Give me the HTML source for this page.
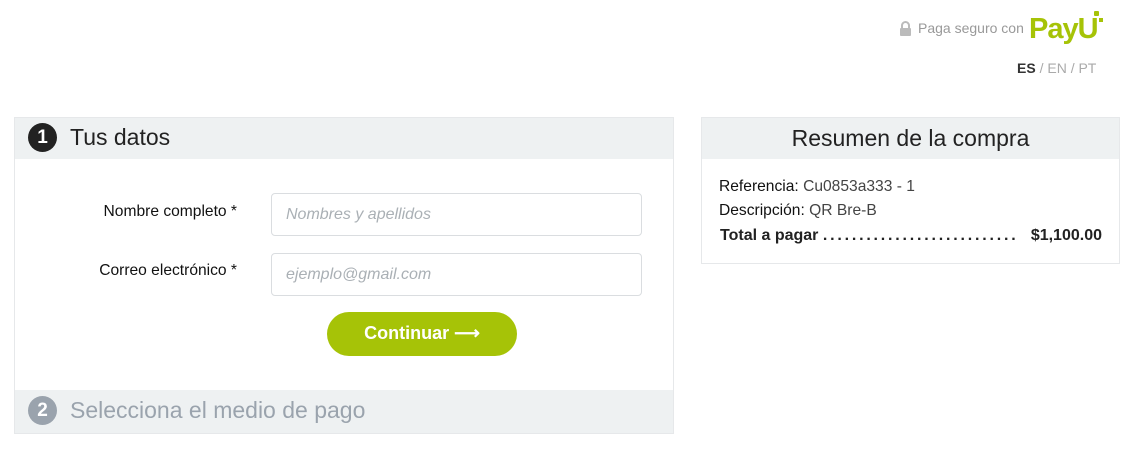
<!DOCTYPE html><html><head><style>
body{margin:0;background:#fff;font-family:"Liberation Sans",sans-serif;width:1132px;height:462px;position:relative;overflow:hidden}
.a{position:absolute}
.hdr{background:#eef1f2;}
.box{border:1px solid #e6e8ea;box-sizing:border-box}
.circ{width:29px;height:29px;border-radius:50%;color:#fff;font-size:19px;font-weight:bold;text-align:center;line-height:29px}
.inp{border:1px solid #dadde0;border-radius:4px;box-sizing:border-box;width:371px;height:43px;font-style:italic;color:#aab0b5;font-size:16px;line-height:41px;padding-left:14px}
.lbl{font-size:15.6px;color:#111;text-align:right;width:237px;left:0}
</style></head><body>
<div class="a" style="left:899px;top:21px;width:12px;height:15px">
<svg width="13" height="15"><path d="M3 7V4.5a3.5 3.5 0 0 1 7 0V7" stroke="#bbb" stroke-width="2" fill="none"/><rect x="1" y="7" width="11" height="8" rx="1" fill="#bbb"/></svg></div>
<div class="a" style="left:918px;top:20px;font-size:14px;color:#999">Paga seguro con</div>
<div class="a" style="left:1029px;top:13px;font-size:29px;font-weight:bold;color:#a6c307;letter-spacing:-1px">PayU</div>
<div class="a" style="left:1094px;top:11px;width:5px;height:5px;background:#a6c307;border-radius:1px"></div>
<div class="a" style="left:1099px;top:18px;width:4px;height:4px;background:#a6c307"></div>
<div class="a" style="left:1017px;top:60px;font-size:14px;color:#aaa"><b style="color:#333">ES</b> / EN / PT</div>

<div class="a box" style="left:14px;top:117px;width:660px;height:317px"></div>
<div class="a hdr" style="left:15px;top:118px;width:658px;height:41px"></div>
<div class="a circ" style="left:28px;top:123px;background:#222">1</div>
<div class="a" style="left:70px;top:124px;font-size:23px;color:#222">Tus datos</div>
<div class="a lbl" style="top:203px">Nombre completo *</div>
<div class="a inp" style="left:271px;top:193px">Nombres y apellidos</div>
<div class="a lbl" style="top:262px">Correo electrónico *</div>
<div class="a inp" style="left:271px;top:253px">ejemplo@gmail.com</div>
<div class="a" style="left:327px;top:312px;width:190px;height:44px;border-radius:22px;background:#a6c307;color:#fff;font-weight:bold;font-size:18px;text-align:center;line-height:42px">Continuar &#10230;</div>
<div class="a hdr" style="left:15px;top:390px;width:658px;height:43px"></div>
<div class="a circ" style="left:28px;top:396px;background:#9aa3ad">2</div>
<div class="a" style="left:70px;top:397px;font-size:23px;color:#9aa3ad">Selecciona el medio de pago</div>

<div class="a box" style="left:701px;top:117px;width:419px;height:147px"></div>
<div class="a hdr" style="left:702px;top:118px;width:417px;height:41px;text-align:center;font-size:23px;color:#222;line-height:41px">Resumen de la compra</div>
<div class="a" style="left:719px;top:178px;font-size:15.6px;color:#111">Referencia: <span style="color:#444">Cu0853a333 - 1</span></div>
<div class="a" style="left:719px;top:202px;font-size:15.6px;color:#111">Descripción: <span style="color:#444">QR Bre-B</span></div>
<div class="a" style="left:720px;top:227px;font-size:16px;font-weight:bold;color:#222">Total a pagar <span style="letter-spacing:2.8px">...........................</span></div>
<div class="a" style="left:1000px;top:227px;width:102px;text-align:right;font-size:16px;font-weight:bold;color:#222">$1,100.00</div>
</body></html>
